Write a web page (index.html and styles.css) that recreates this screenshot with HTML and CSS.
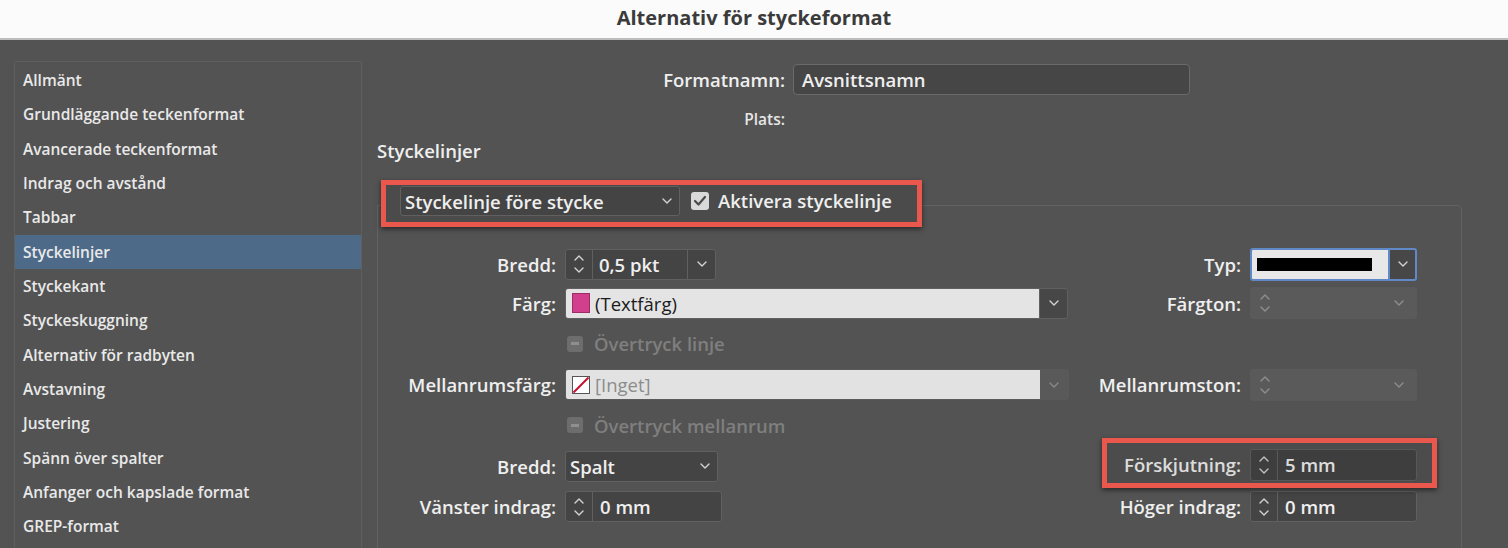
FILE: index.html
```html
<!DOCTYPE html>
<html lang="sv">
<head>
<meta charset="utf-8">
<title>Alternativ för styckeformat</title>
<link rel="stylesheet" href="styles.css">
</head>
<body>
<div class="titlebar">Alternativ för styckeformat</div>
<div class="dialog">
  <ul class="nav">
    <li>Allmänt</li>
    <li>Grundläggande teckenformat</li>
    <li>Avancerade teckenformat</li>
    <li>Indrag och avstånd</li>
    <li>Tabbar</li>
    <li class="active">Styckelinjer</li>
    <li>Styckekant</li>
    <li>Styckeskuggning</li>
    <li>Alternativ för radbyten</li>
    <li>Avstavning</li>
    <li>Justering</li>
    <li>Spänn över spalter</li>
    <li>Anfanger och kapslade format</li>
    <li>GREP-format</li>
  </ul>
  <div class="main">
    <div class="name-row">
      <span class="lbl">Formatnamn:</span>
      <div class="input">Avsnittsnamn</div>
    </div>
    <div class="plats-row">
      <span class="plats">Plats:</span>
    </div>
    <h2 class="heading">Styckelinjer</h2>
    <div class="group">
      <div class="legend">
        <div class="field select legend-select">
          <span class="value">Styckelinje före stycke</span>
          <span class="chev"><svg width="10" height="6" viewBox="0 0 10 6"><polyline points="1,1 5,5 9,1"/></svg></span>
        </div>
        <span class="check on"><svg width="18" height="18" viewBox="0 0 18 18"><polyline points="4,9 7.5,12.5 14,5"/></svg></span>
        <span class="legend-text">Aktivera styckelinje</span>
      </div>

      <div class="grid">
        <!-- row A -->
        <span class="lbl first">Bredd:</span>
        <div class="field spin w151 first">
          <span class="stepper"><svg width="10" height="20" viewBox="0 0 10 20"><polyline points="1,6 5,2 9,6"/><polyline points="1,14 5,18 9,14"/></svg></span>
          <span class="value">0,5 pkt</span>
          <span class="drop"><svg width="10" height="6" viewBox="0 0 10 6"><polyline points="1,1 5,5 9,1"/></svg></span>
        </div>
        <span class="lbl first">Typ:</span>
        <div class="field typ first">
          <span class="typ-body"><span class="stroke-sample"></span></span>
          <span class="drop"><svg width="10" height="6" viewBox="0 0 10 6"><polyline points="1,1 5,5 9,1"/></svg></span>
        </div>

        <!-- row B -->
        <span class="lbl">Färg:</span>
        <div class="field color w503">
          <span class="color-body"><span class="swatch pink"></span><span class="color-text">(Textfärg)</span></span>
          <span class="drop"><svg width="10" height="6" viewBox="0 0 10 6"><polyline points="1,1 5,5 9,1"/></svg></span>
        </div>
        <span class="lbl">Färgton:</span>
        <div class="field disabled">
          <span class="stepper"><svg width="10" height="20" viewBox="0 0 10 20"><polyline points="1,6 5,2 9,6"/><polyline points="1,14 5,18 9,14"/></svg></span>
          <span class="value"></span>
          <span class="drop"><svg width="10" height="6" viewBox="0 0 10 6"><polyline points="1,1 5,5 9,1"/></svg></span>
        </div>

        <!-- row C -->
        <span class="lbl"></span>
        <div class="checkrow dim"><span class="check off"></span><span>Övertryck linje</span></div>
        <span class="lbl"></span>
        <span></span>

        <!-- row D -->
        <span class="lbl">Mellanrumsfärg:</span>
        <div class="field color gap-color w504">
          <span class="color-body"><span class="swatch none"><svg width="18" height="18" viewBox="0 0 18 18"><rect x="0.5" y="0.5" width="17" height="17" fill="#fff" stroke="#555"/><line x1="1.5" y1="16.5" x2="16.5" y2="1.5" stroke="#c8102e" stroke-width="2"/></svg></span><span class="color-text">[Inget]</span></span>
          <span class="drop"><svg width="10" height="6" viewBox="0 0 10 6"><polyline points="1,1 5,5 9,1"/></svg></span>
        </div>
        <span class="lbl">Mellanrumston:</span>
        <div class="field disabled">
          <span class="stepper"><svg width="10" height="20" viewBox="0 0 10 20"><polyline points="1,6 5,2 9,6"/><polyline points="1,14 5,18 9,14"/></svg></span>
          <span class="value"></span>
          <span class="drop"><svg width="10" height="6" viewBox="0 0 10 6"><polyline points="1,1 5,5 9,1"/></svg></span>
        </div>

        <!-- row E -->
        <span class="lbl"></span>
        <div class="checkrow dim"><span class="check off"></span><span>Övertryck mellanrum</span></div>
        <span class="lbl"></span>
        <span></span>

        <!-- row F -->
        <span class="lbl">Bredd:</span>
        <div class="field select w153">
          <span class="value">Spalt</span>
          <span class="chev"><svg width="10" height="6" viewBox="0 0 10 6"><polyline points="1,1 5,5 9,1"/></svg></span>
        </div>
        <span class="lbl lbl-up">Förskjutning:</span>
        <div class="field spin plain up">
          <span class="stepper"><svg width="10" height="20" viewBox="0 0 10 20"><polyline points="1,6 5,2 9,6"/><polyline points="1,14 5,18 9,14"/></svg></span>
          <span class="value">5 mm</span>
        </div>

        <!-- row G -->
        <span class="lbl">Vänster indrag:</span>
        <div class="field spin plain w157">
          <span class="stepper"><svg width="10" height="20" viewBox="0 0 10 20"><polyline points="1,6 5,2 9,6"/><polyline points="1,14 5,18 9,14"/></svg></span>
          <span class="value">0 mm</span>
        </div>
        <span class="lbl">Höger indrag:</span>
        <div class="field spin plain">
          <span class="stepper"><svg width="10" height="20" viewBox="0 0 10 20"><polyline points="1,6 5,2 9,6"/><polyline points="1,14 5,18 9,14"/></svg></span>
          <span class="value">0 mm</span>
        </div>
      </div>

      <div class="mark"></div>
    </div>
  </div>
</div>
</body>
</html>
```
FILE: styles.css
```css
* { box-sizing: border-box; }

html, body {
  margin: 0;
  padding: 0;
}

body {
  width: 1508px;
  height: 548px;
  overflow: hidden;
  background: #535353;
  font-family: "Open Sans", "DejaVu Sans", sans-serif;
  color: #efefef;
}

.titlebar {
  height: 40px;
  background: #fbfbfb;
  border-bottom: 2px solid #bdbdbd;
  text-align: center;
  font-size: 20px;
  font-weight: 700;
  line-height: 35px;
  color: #3b3b3b;
}

.dialog {
  display: flex;
  height: 508px;
  overflow: hidden;
  padding-top: 21px;
}

/* ---------- sidebar ---------- */
.nav {
  list-style: none;
  margin: 0 0 0 14px;
  padding: 1px 0;
  width: 348px;
  height: 487px;
  flex: none;
  border: 1px solid #5f5f5f;
  border-bottom: none;
  border-radius: 2px 2px 0 0;
}

.nav li {
  height: 34.33px;
  line-height: 34.33px;
  padding-left: 8px;
  font-size: 15.5px;
  font-weight: 600;
  color: #e9e9e9;
  white-space: nowrap;
}

.nav li.active {
  background: #4e6a89;
}

/* ---------- main ---------- */
.main {
  flex: 1;
  padding: 3px 0 0 15px;
}

.name-row,
.plats-row {
  display: grid;
  grid-template-columns: 408px 397px;
  column-gap: 8px;
  align-items: center;
}

.name-row { height: 31px; }

.lbl {
  font-size: 18.5px;
  font-weight: 600;
  text-align: right;
  white-space: nowrap;
  color: #efefef;
}

.input {
  height: 31px;
  border: 1px solid #6a6a6a;
  border-radius: 4px;
  background: #464646;
  padding-left: 8px;
  font-size: 18.5px;
  font-weight: 600;
  line-height: 29px;
}

.plats-row {
  margin-top: 13px;
  height: 20px;
}

.plats {
  font-size: 15.5px;
  font-weight: 600;
  text-align: right;
  color: #e6e6e6;
}

.heading {
  margin: 11px 0 0 0;
  height: 24px;
  line-height: 24px;
  font-size: 18.5px;
  font-weight: 600;
  color: #efefef;
}

/* ---------- group box ---------- */
.group {
  position: relative;
  margin-top: 42px;
  width: 1085px;
  height: 343px;
  border: 1px solid #626262;
  border-bottom: none;
  border-radius: 0 5px 0 0;
  padding-right: 44px;
}

.legend {
  display: flex;
  align-items: flex-start;
  width: 541px;
  height: 47px;
  margin: -26px 0 0 3px;
  border: 5px solid #ea574d;
  background: #4b4b4b;
  box-shadow: 0 2px 5px rgba(0, 0, 0, 0.55);
  padding: 1px 0 0 14px;
}

.field.legend-select {
  width: 280px;
  height: 30px;
  flex: none;
}

.legend .check.on {
  margin-top: 6px;
}

.legend-text {
  margin-left: 9px;
  line-height: 30px;
  font-size: 18.5px;
  font-weight: 600;
  color: #efefef;
  white-space: nowrap;
}

.grid {
  margin-top: 15px;
  display: grid;
  grid-template-columns: 178px 503px 164px 167px;
  grid-auto-rows: 40.75px;
  column-gap: 9px;
  align-items: center;
}

.grid .first { margin-top: 4px; }

/* ---------- fields ---------- */
.field {
  display: flex;
  height: 31px;
  width: 167px;
  border: 1px solid #606060;
  border-radius: 3px;
  background: #444444;
  font-size: 18.5px;
  font-weight: 600;
  color: #efefef;
  overflow: hidden;
}

.field svg polyline {
  fill: none;
  stroke: #d2d2d2;
  stroke-width: 1.4;
  stroke-linecap: round;
  stroke-linejoin: round;
}

.w151 { width: 151px; }
.w153 { width: 153px; }
.w157 { width: 157px; }
.w503 { width: 503px; }
.w504 { width: 504px; }

.stepper {
  flex: none;
  width: 27px;
  border-right: 1px solid #606060;
  display: flex;
  align-items: center;
  justify-content: center;
}

.value {
  flex: 1;
  display: flex;
  align-items: center;
  padding-left: 6px;
  white-space: nowrap;
  overflow: hidden;
}

.drop {
  flex: none;
  width: 28px;
  border-left: 1px solid #606060;
  display: flex;
  align-items: center;
  justify-content: center;
}

.select .value { padding-left: 4px; }

.chev {
  flex: none;
  width: 24px;
  display: flex;
  align-items: center;
  justify-content: center;
}

/* light color fields */
.color { background: #474747; }

.color-body {
  flex: 1;
  display: flex;
  align-items: center;
  background: #e4e4e4;
  padding-left: 6px;
}

.color-text {
  margin-left: 5px;
  color: #1b1b1b;
  font-weight: 500;
}

.swatch {
  flex: none;
  width: 18px;
  height: 20px;
}

.swatch.pink {
  background: #d23f8d;
  border: 1px solid #9e2c68;
}

.swatch.none { height: 18px; }
.swatch.none svg { display: block; }

.gap-color {
  border-color: #5a5a5a;
  background: #595959;
}

.gap-color .color-body { background: #e2e2e2; }
.gap-color .color-text { color: #8c8c8c; }
.gap-color .drop { border-left: none; }
.gap-color .drop svg polyline { stroke: #8a8a8a; }

/* Typ */
.typ {
  height: 33px;
  border: 2px solid #6089c8;
  background: #474747;
}

.typ-body {
  flex: 1;
  display: flex;
  align-items: center;
  background: #e8e8e8;
  padding-left: 5px;
}

.stroke-sample {
  width: 115px;
  height: 13px;
  background: #000;
}

.typ .drop {
  width: 27px;
  border-left: 2px solid #6089c8;
}

/* disabled */
.disabled {
  height: 32px;
  border-color: #5a5a5a;
  background: #5a5a5a;
}

.disabled .stepper,
.disabled .drop { border: none; }

.disabled .drop { width: 34px; }

.disabled svg polyline { stroke: #8e8e8e; }

/* checkbox rows */
.checkrow {
  display: flex;
  align-items: center;
  padding-left: 2px;
  font-size: 18.5px;
  font-weight: 600;
}

.checkrow.dim { color: #7f7f7f; }

.check {
  flex: none;
  display: flex;
  align-items: center;
  justify-content: center;
  border-radius: 3px;
}

.check.on {
  width: 18px;
  height: 18px;
  margin-left: 11px;
  background: #d9d9d9;
}

.check.on polyline {
  fill: none;
  stroke: #4a4a4a;
  stroke-width: 2.2;
  stroke-linecap: round;
  stroke-linejoin: round;
}

.check.off {
  width: 16px;
  height: 16px;
  margin-right: 11px;
  background: #6d6d6d;
}

.check.off::after {
  content: "";
  width: 8px;
  height: 3px;
  background: #8f8f8f;
}

.plain .value { padding-left: 7px; }

.up { margin-top: -3px; height: 32px; }
.lbl-up { margin-top: -3px; }

/* annotation frame */
.mark {
  position: absolute;
  left: 724px;
  top: 232px;
  width: 335px;
  height: 50px;
  border: 5px solid #ea574d;
  background: rgba(0, 0, 0, 0.08);
  box-shadow: 0 2px 5px rgba(0, 0, 0, 0.55);
}
```
